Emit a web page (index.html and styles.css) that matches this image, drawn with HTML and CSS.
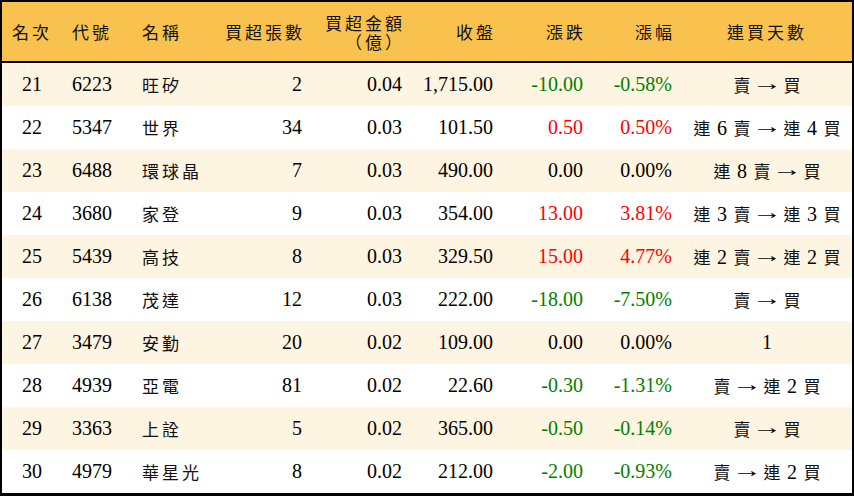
FILE: index.html
```html
<!DOCTYPE html>
<html lang="zh-Hant">
<head>
<meta charset="utf-8">
<title>買超排行</title>
<link rel="stylesheet" href="styles.css">
</head>
<body>
<div class="board">
<table class="rank-table">
<colgroup>
<col class="c1"><col class="c2"><col class="c3"><col class="c4"><col class="c5"><col class="c6"><col class="c7"><col class="c8"><col class="c9">
</colgroup>
<thead>
<tr>
<th class="ctr"><span class="k">名次</span></th>
<th class="ctr"><span class="k">代號</span></th>
<th class="lft"><span class="k">名稱</span></th>
<th class="rgt"><span class="k">買超張數</span></th>
<th class="rgt"><span class="k hl">買超金額</span><br><span class="k hl">（億）</span></th>
<th class="rgt"><span class="k">收盤</span></th>
<th class="rgt"><span class="k">漲跌</span></th>
<th class="rgt"><span class="k">漲幅</span></th>
<th class="ctr"><span class="k">連買天數</span></th>
</tr>
</thead>
<tbody>
<tr class="alt"><td class="ctr">21</td><td class="ctr">6223</td><td class="lft"><span class="k">旺矽</span></td><td class="rgt">2</td><td class="rgt">0.04</td><td class="rgt">1,715.00</td><td class="rgt down">-10.00</td><td class="rgt down">-0.58%</td><td class="ctr"><span class="g">賣</span> <span class="arr">→</span> <span class="g">買</span></td></tr>
<tr><td class="ctr">22</td><td class="ctr">5347</td><td class="lft"><span class="k">世界</span></td><td class="rgt">34</td><td class="rgt">0.03</td><td class="rgt">101.50</td><td class="rgt up">0.50</td><td class="rgt up">0.50%</td><td class="ctr"><span class="g">連</span> 6 <span class="g">賣</span> <span class="arr">→</span> <span class="g">連</span> 4 <span class="g">買</span></td></tr>
<tr class="alt"><td class="ctr">23</td><td class="ctr">6488</td><td class="lft"><span class="k">環球晶</span></td><td class="rgt">7</td><td class="rgt">0.03</td><td class="rgt">490.00</td><td class="rgt">0.00</td><td class="rgt">0.00%</td><td class="ctr"><span class="g">連</span> 8 <span class="g">賣</span> <span class="arr">→</span> <span class="g">買</span></td></tr>
<tr><td class="ctr">24</td><td class="ctr">3680</td><td class="lft"><span class="k">家登</span></td><td class="rgt">9</td><td class="rgt">0.03</td><td class="rgt">354.00</td><td class="rgt up">13.00</td><td class="rgt up">3.81%</td><td class="ctr"><span class="g">連</span> 3 <span class="g">賣</span> <span class="arr">→</span> <span class="g">連</span> 3 <span class="g">買</span></td></tr>
<tr class="alt"><td class="ctr">25</td><td class="ctr">5439</td><td class="lft"><span class="k">高技</span></td><td class="rgt">8</td><td class="rgt">0.03</td><td class="rgt">329.50</td><td class="rgt up">15.00</td><td class="rgt up">4.77%</td><td class="ctr"><span class="g">連</span> 2 <span class="g">賣</span> <span class="arr">→</span> <span class="g">連</span> 2 <span class="g">買</span></td></tr>
<tr><td class="ctr">26</td><td class="ctr">6138</td><td class="lft"><span class="k">茂達</span></td><td class="rgt">12</td><td class="rgt">0.03</td><td class="rgt">222.00</td><td class="rgt down">-18.00</td><td class="rgt down">-7.50%</td><td class="ctr"><span class="g">賣</span> <span class="arr">→</span> <span class="g">買</span></td></tr>
<tr class="alt"><td class="ctr">27</td><td class="ctr">3479</td><td class="lft"><span class="k">安勤</span></td><td class="rgt">20</td><td class="rgt">0.02</td><td class="rgt">109.00</td><td class="rgt">0.00</td><td class="rgt">0.00%</td><td class="ctr">1</td></tr>
<tr><td class="ctr">28</td><td class="ctr">4939</td><td class="lft"><span class="k">亞電</span></td><td class="rgt">81</td><td class="rgt">0.02</td><td class="rgt">22.60</td><td class="rgt down">-0.30</td><td class="rgt down">-1.31%</td><td class="ctr"><span class="g">賣</span> <span class="arr">→</span> <span class="g">連</span> 2 <span class="g">買</span></td></tr>
<tr class="alt"><td class="ctr">29</td><td class="ctr">3363</td><td class="lft"><span class="k">上詮</span></td><td class="rgt">5</td><td class="rgt">0.02</td><td class="rgt">365.00</td><td class="rgt down">-0.50</td><td class="rgt down">-0.14%</td><td class="ctr"><span class="g">賣</span> <span class="arr">→</span> <span class="g">買</span></td></tr>
<tr><td class="ctr">30</td><td class="ctr">4979</td><td class="lft"><span class="k">華星光</span></td><td class="rgt">8</td><td class="rgt">0.02</td><td class="rgt">212.00</td><td class="rgt down">-2.00</td><td class="rgt down">-0.93%</td><td class="ctr"><span class="g">賣</span> <span class="arr">→</span> <span class="g">連</span> 2 <span class="g">買</span></td></tr>
</tbody>
</table>
</div>
</body>
</html>
```
FILE: styles.css
```css
html, body {
  margin: 0;
  padding: 0;
  background: #ffffff;
}

.board {
  width: 854px;
  height: 496px;
  box-sizing: border-box;
  border: 2px solid #000;
  border-bottom-width: 3px;
  overflow: hidden;
}

.rank-table {
  width: 850px;
  table-layout: fixed;
  border-collapse: separate;
  border-spacing: 0;
  font-family: "Liberation Serif", "Noto Sans CJK TC", serif;
  font-size: 20px;
  color: #000;
}

.c1 { width: 60px; }
.c2 { width: 60px; }
.c3 { width: 90px; }
.c4 { width: 100px; }
.c5 { width: 100px; }
.c6 { width: 91px; }
.c7 { width: 90px; }
.c8 { width: 89px; }
.c9 { width: 170px; }

.rank-table thead tr {
  height: 61px;
}

.rank-table th {
  background: #f9c14e;
  border-bottom: 2px solid #000;
  font-weight: normal;
  line-height: 19px;
  padding: 0 10px;
  vertical-align: middle;
}

.rank-table tbody tr {
  height: 43px;
}

.rank-table td {
  padding: 0 10px;
  vertical-align: middle;
  white-space: nowrap;
}

.rank-table tbody tr.alt td {
  background: #fdf4e1;
}

.k {
  font-family: "Noto Sans CJK TC", "Noto Sans CJK SC", sans-serif;
  font-size: 17px;
  letter-spacing: 3px;
  color: #111;
}

.hl {
  display: inline-block;
  line-height: 19px;
  height: 19px;
  vertical-align: top;
}

.g {
  font-family: "Noto Sans CJK TC", "Noto Sans CJK SC", sans-serif;
  font-size: 17px;
  padding: 0 1.5px;
  color: #111;
}

.arr {
  font-family: "Liberation Serif", serif;
  font-size: 20px;
  display: inline-block;
  width: 20px;
  text-align: center;
  transform: translateY(-2px) scaleX(1.5);
}

.ctr { text-align: center; }
.lft { text-align: left; }
.rgt { text-align: right; }

td.lft { padding-left: 20px; }
th.lft { padding-left: 20px; }
th.rgt { padding-right: 7px; }

.up { color: #ff0000; }
.down { color: #008000; }
```
